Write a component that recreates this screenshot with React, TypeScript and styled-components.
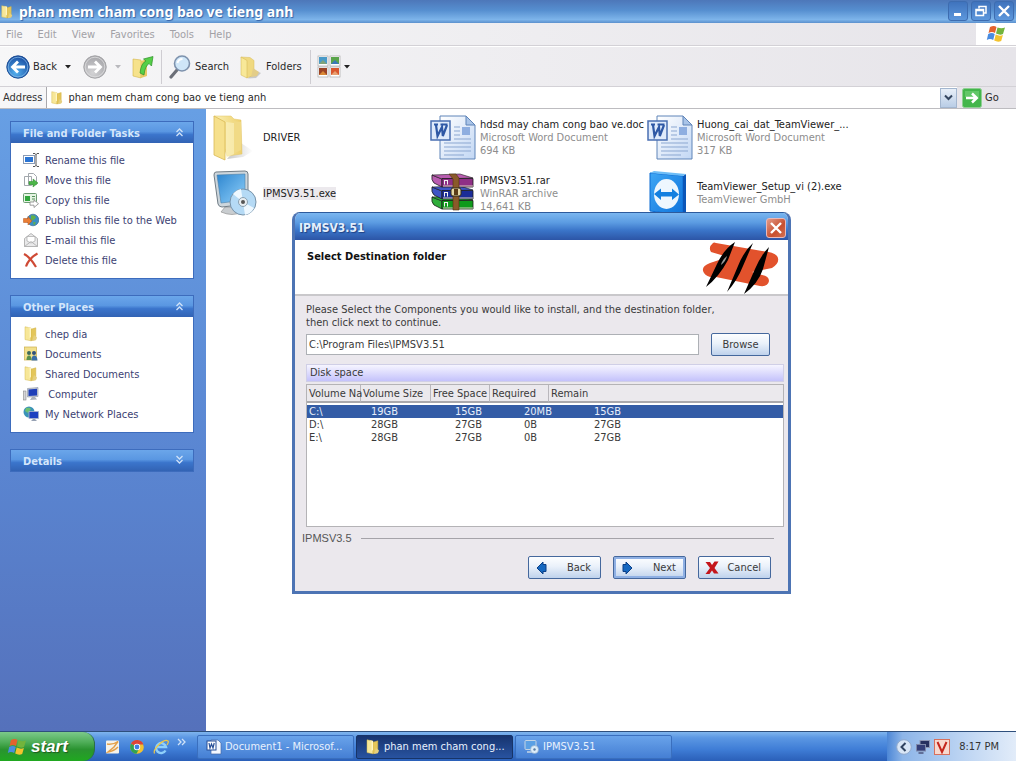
import React from "react";
import styled, { createGlobalStyle, css } from "styled-components";

const ui = `"DejaVu Sans Condensed", "Noto Sans", sans-serif`;

const GlobalStyle = createGlobalStyle`
  *, *::before, *::after { box-sizing: border-box; }
  body { margin: 0; background: #fff; font: 11px/13px ${ui}; color: #2a2a2a; }
  button, input { font: inherit; color: inherit; }
  ul { list-style: none; margin: 0; padding: 0; }
  h1, h2, h3, p { margin: 0; font-size: inherit; }
  svg { display: block; flex: none; }
`;

const Screen = styled.div`
  min-height: 100vh;
  display: flex;
  flex-direction: column;
  padding-right: 8px;
`;

/* ---------- Explorer chrome ---------- */

const TitleBar = styled.header`
  display: flex;
  align-items: center;
  height: 23px;
  background: linear-gradient(#4d77b9 0%, #568fd0 45%, #7db4ea 85%, #5b90cd 100%);
  color: #fff;
`;

const WindowTitle = styled.h1`
  flex: 1;
  padding-left: 5px;
  font: bold 14px/20px "Noto Sans", sans-serif;
  text-shadow: 1px 1px 1px #3562a5;
  white-space: nowrap;
`;

const WindowButtons = styled.div`
  display: flex;
  gap: 3px;
  padding: 0 2px 2px 0;
`;

const CaptionButton = styled.button<{ $danger?: boolean }>`
  display: grid;
  place-items: center;
  width: 20px;
  height: 20px;
  padding: 0;
  border: 1px solid ${(p) => (p.$danger ? "#e9b9b9" : "#3d6cb0")};
  border-radius: 3px;
  background: ${(p) =>
    p.$danger
      ? "linear-gradient(135deg, #e39a88, #c8502f 60%, #d4704f)"
      : "linear-gradient(#3f73bd, #5c97dc)"};
`;

const MenuBar = styled.nav`
  display: flex;
  height: 23px;
  border-bottom: 1px solid #d3d1d6;
  background: linear-gradient(90deg, #f7f7f8, #e6e4e9);
`;

const MenuItems = styled.div`
  display: flex;
  flex: 1;
  gap: 15px;
  padding-left: 6px;
`;

const MenuButton = styled.button`
  padding: 0;
  border: 0;
  background: none;
  color: #a2a1a6;
`;

const FlagBox = styled.div`
  display: grid;
  place-items: center;
  width: 40px;
  background: #fff;
`;

const ToolBar = styled.div`
  display: flex;
  align-items: center;
  height: 40px;
  padding-left: 6px;
  border-top: 1px solid #fff;
  background: linear-gradient(90deg, #f7f7f8, #e6e4e9);
`;

const ToolButton = styled.button<{ $end?: number }>`
  display: flex;
  align-items: center;
  gap: 3px;
  margin-right: ${(p) => p.$end ?? 0}px;
  padding: 0;
  border: 0;
  background: none;
`;

const Divider = styled.span`
  width: 1px;
  height: 34px;
  margin-right: 3px;
  background: #cfcdd2;
`;

const AddressBar = styled.div`
  display: flex;
  align-items: center;
  height: 23px;
  border-top: 1px solid #d3d1d6;
  border-bottom: 1px solid #bdbcc0;
  background: linear-gradient(90deg, #f7f7f8, #e6e4e9);
`;

const AddressLabel = styled.label`
  padding: 0 4px 0 3px;
  color: #333;
`;

const AddressField = styled.div`
  display: flex;
  flex: 1;
  align-items: center;
  gap: 4px;
  height: 21px;
  padding-left: 3px;
  border-left: 1px solid #a9a9ad;
  background: #fff;
`;

const AddressInput = styled.input`
  flex: 1;
  min-width: 0;
  padding: 0;
  border: 0;
  outline: 0;
  background: none;
`;

const DropButton = styled.button`
  display: grid;
  place-items: center;
  width: 17px;
  height: 20px;
  padding: 0;
  border: 1px solid #a3b6cf;
  background: linear-gradient(#e8eff8, #b9cde6);
`;

const GoButton = styled.button`
  display: flex;
  align-items: center;
  gap: 3px;
  width: 59px;
  padding: 0 0 0 5px;
  border: 0;
  background: none;
`;

/* ---------- Task pane ---------- */

const Body = styled.div`
  display: flex;
  flex: 1;
`;

const TaskPane = styled.aside`
  display: flex;
  flex-direction: column;
  gap: 16px;
  width: 206px;
  padding: 12px 12px 16px 10px;
  background: linear-gradient(#679fe4, #5a86d2 55%, #5571bb);
`;

const Panel = styled.section`
  border: 1px solid #3d6cbd;
  background: #fff;
`;

const PanelHeader = styled.button`
  display: flex;
  align-items: center;
  justify-content: space-between;
  width: 100%;
  height: 21px;
  padding: 1px 9px 0 12px;
  border: 0;
  background: linear-gradient(#6ba6ea 0%, #5a97e2 45%, #3b75cc 60%, #3263b4 100%);
  color: #d4e6fb;
  font-weight: bold;
`;

const PanelList = styled.ul`
  padding: 7px 0 8px 12px;
`;

const TaskLink = styled.a`
  display: flex;
  align-items: center;
  gap: 6px;
  height: 20px;
  color: #3c4273;
  text-decoration: none;
  white-space: nowrap;
`;

/* ---------- File list ---------- */

const FilePane = styled.main`
  position: relative;
  flex: 1;
  padding-left: 7px;
  background: #fff;
`;

const FileGrid = styled.ul`
  display: grid;
  grid-template-columns: repeat(3, 217px);
  grid-auto-rows: 56px;
`;

const FileItem = styled.li`
  display: flex;
  align-items: center;
  gap: 2px;
`;

const FileText = styled.div`
  display: flex;
  flex-direction: column;
  align-items: flex-start;
  color: #8d8d8d;
  white-space: nowrap;
`;

const FileName = styled.span<{ $selected?: boolean }>`
  color: #222;
  background: ${(p) => (p.$selected ? "#ece9ed" : "none")};
`;

/* ---------- Installer dialog ---------- */

const Dialog = styled.section`
  position: absolute;
  left: 86px;
  top: 103px;
  width: 499px;
  border: 3px solid #4d74b4;
  border-top: 1px solid #2d5a9c;
  border-radius: 8px 8px 0 0;
  background: #ebe8ed;
  color: #3a3a3a;
  overflow: hidden;
`;

const DialogTitle = styled.header`
  display: flex;
  align-items: center;
  justify-content: space-between;
  height: 27px;
  padding: 2px 2px 0 4px;
  background: linear-gradient(#7ab6f0 0%, #5c9ce2 35%, #3a74c8 65%, #2c55a6 100%);
  color: #e4effc;
  font: bold 12px/16px ${ui};
  text-shadow: 1px 1px 1px #1f4184;
`;

const Banner = styled.div`
  display: flex;
  justify-content: space-between;
  height: 56px;
  padding: 2px 8px 0 12px;
  border-bottom: 2px solid #c9c8cb;
  background: #fff;
`;

const BannerTitle = styled.h3`
  padding-top: 8px;
  color: #111;
`;

const DialogBody = styled.div`
  padding: 7px 4px 0 11px;
`;

const PathRow = styled.div`
  display: flex;
  align-items: center;
  gap: 12px;
  padding: 4px 14px 8px 0;
`;

const PathInput = styled.input`
  flex: 1;
  min-width: 0;
  height: 21px;
  padding: 0 2px;
  border: 1px solid #adb0b5;
  border-radius: 0;
  outline: 0;
  background: #fff;
`;

const PushButton = styled.button<{ $width: number; $primary?: boolean }>`
  display: flex;
  align-items: center;
  justify-content: ${(p) => (p.$width > 60 ? "space-between" : "center")};
  width: ${(p) => p.$width}px;
  height: 23px;
  padding: ${(p) => (p.$width > 60 ? "0 9px 0 5px" : "0")};
  border: 1px solid #45689d;
  border-radius: 2px;
  background: linear-gradient(#fdfeff, #eaf1fa 45%, #bfd2ec);
  ${(p) =>
    p.$primary &&
    css`
      box-shadow: inset 0 0 0 2px #8fb0e4;
    `}
`;

const DiskBar = styled.h3`
  height: 18px;
  padding-left: 3px;
  border: 1px solid #d0cfe6;
  background: linear-gradient(#f6f5ff, #c4c2fb);
  font-weight: normal;
  line-height: 16px;
`;

const DiskFrame = styled.div`
  height: 143px;
  margin-top: 2px;
  border: 1px solid #b4b3b6;
  background: #fff;
`;

const DiskTable = styled.table`
  width: 100%;
  table-layout: fixed;
  border-collapse: separate;
  border-spacing: 0;
  line-height: 13px;
`;

const DiskHead = styled.thead`
  background: #ebe9ed;
  &::after {
    content: "";
    display: table-row;
    height: 2px;
    background: #fff;
  }
`;

const HeadCell = styled.th<{ $width?: number }>`
  width: ${(p) => (p.$width ? `${p.$width}px` : "auto")};
  height: 18px;
  padding: 0 0 0 2px;
  border-right: 1px solid #b9b7bc;
  border-bottom: 2px solid #a9a8ac;
  font-weight: normal;
  text-align: left;
  white-space: nowrap;
  &:last-child { border-right: 0; }
`;

const DiskRow = styled.tr<{ $selected?: boolean }>`
  color: ${(p) => (p.$selected ? "#e6eefa" : "#3a3a3a")};
  background: ${(p) => (p.$selected ? "#335ca6" : "none")};
`;

const DiskCell = styled.td<{ $indent: number }>`
  padding: 0 0 0 ${(p) => p.$indent}px;
  white-space: nowrap;
`;

const Brand = styled.div`
  display: flex;
  align-items: center;
  gap: 9px;
  padding: 5px 14px 0 7px;
  color: #555;
  font: 11px/13px "Liberation Sans", sans-serif;
  &::after {
    content: "";
    flex: 1;
    height: 1px;
    background: #a5a3a9;
  }
`;

const DialogActions = styled.footer`
  display: flex;
  justify-content: flex-end;
  gap: 12px;
  padding: 11px 17px 12px;
`;

/* ---------- Task bar ---------- */

const TaskBar = styled.footer`
  display: flex;
  align-items: center;
  height: 30px;
  border-top: 1px solid #2e4f7c;
  background: linear-gradient(#7fb5ee 0%, #5b97e3 20%, #3f7dd6 60%, #2a5fb8 100%);
  color: #e8f1fd;
`;

const StartButton = styled.button`
  display: flex;
  align-items: center;
  gap: 4px;
  width: 95px;
  height: 29px;
  padding: 0 0 0 7px;
  border: 0;
  border-right: 1px solid #2c6d45;
  border-radius: 0 12px 12px 0;
  background: linear-gradient(#7cc98a 0%, #4fae59 35%, #2a9330 60%, #20a820 100%);
  color: #fff;
  font: italic bold 17px/20px "Liberation Sans", sans-serif;
  text-shadow: 1px 1px 1px #1b5a20;
`;

const QuickLaunch = styled.div`
  display: flex;
  align-items: center;
  gap: 8px;
  width: 102px;
  padding-left: 10px;
`;

const TaskButtons = styled.div`
  display: flex;
  flex: 1;
  gap: 2px;
`;

const TaskButton = styled.button<{ $active?: boolean }>`
  display: flex;
  align-items: center;
  gap: 3px;
  width: 157px;
  height: 24px;
  padding: 0 0 0 8px;
  border: 1px solid ${(p) => (p.$active ? "#173468" : "#3a6fbe")};
  border-radius: 2px;
  background: ${(p) =>
    p.$active
      ? "linear-gradient(#17346f, #2853a0)"
      : "linear-gradient(#69a3ea, #457fd4)"};
  color: #e8f1fd;
  white-space: nowrap;
`;

const Tray = styled.div`
  display: flex;
  align-items: center;
  gap: 3px;
  height: 29px;
  padding: 0 17px 0 9px;
  background: linear-gradient(90deg, #4d87d6 0%, #8db5e8 12%, #b9d2f2 55%, #e2ecf9 100%);
  color: #333;
`;

const Clock = styled.time`
  padding-left: 6px;
`;

/* ---------- Drawings ---------- */

const Folder = ({ size = 16 }: { size?: number }) => (
  <svg width={size} height={size} viewBox="0 0 16 16">
    <path d="M2 .8 8 2v12.800L2 13.600z" fill="#f7e798" stroke="#d5b84e" strokeWidth=".5" />
    <path d="M8 3.200 12.800 1.800v11.500L8 14.800z" fill="#e4c659" stroke="#cfae43" strokeWidth=".5" />
    <path d="M4.400 1.300 8 2v9l-1.400 1V2.600z" fill="#fff6c4" />
    <path d="M11 9l3 2.600-1.200 2.600L9 15z" fill="#e5cf7e" />
  </svg>
);

const ToolFolder = () => (
  <svg width="24" height="24" viewBox="0 0 24 24">
    <path d="M15 15l7 3-5 5-8 .5z" fill="#c9c9c9" />
    <path d="M2 2l9 .5 4 3V20l-7 3z" fill="#f0d980" stroke="#d8bd5c" strokeWidth=".5" />
    <path d="M2 2l6 3.500V23l-6-3z" fill="#f8e898" stroke="#d3b450" strokeWidth=".5" />
    <path d="M14 13l6 4-2 4-6 1z" fill="#e3cd88" />
  </svg>
);

const BigFolder = () => (
  <svg width="48" height="48" viewBox="0 0 48 48">
    <defs>
      <linearGradient id="bf1" x1="0" x2="1">
        <stop offset="0" stopColor="#fbf1b4" />
        <stop offset="1" stopColor="#edcf6c" />
      </linearGradient>
      <linearGradient id="bf2" x1="0" x2="1">
        <stop offset="0" stopColor="#bbb" />
        <stop offset="1" stopColor="#fff" />
      </linearGradient>
    </defs>
    <path d="M28 30l12 8-10 6-16 2z" fill="url(#bf2)" opacity=".8" />
    <path d="M1 3 18 3l3 3 7 1 1 34-15 2z" fill="url(#bf1)" stroke="#e2c466" strokeWidth=".5" />
    <path d="M20 8l8 1v28l-8 4z" fill="#f1da86" />
    <path d="M1 3 12 9v38L1 42z" fill="#f6e08c" stroke="#d9b955" strokeWidth=".8" />
    <path d="M13 9l8 1v31l-8 4z" fill="#fbf3c4" opacity=".6" />
  </svg>
);

const WordDoc = () => (
  <svg width="48" height="48" viewBox="0 0 48 48">
    <defs>
      <linearGradient id="wd" x1="0" y1="0" x2="1" y2="1">
        <stop offset="0" stopColor="#fff" />
        <stop offset="1" stopColor="#c2d7f4" />
      </linearGradient>
    </defs>
    <path d="M10 3h26l9 9v34H10z" fill="url(#wd)" stroke="#5f84b8" />
    <path d="M36 3v9h9z" fill="#a9c4e8" stroke="#5f84b8" />
    <path d="M24 14h6M24 18h6M24 22h6M14 30h27M14 34h27M14 38h27M14 42h20" stroke="#8ba7d1" />
    <path d="M24 26h17" stroke="#8ba7d1" />
    <rect x="32" y="14" width="8" height="8" fill="#8eaee0" />
    <rect x="1" y="8" width="19" height="19" fill="#dfeafb" stroke="#4a6fb2" strokeWidth="1.500" />
    <path d="M4 11.500h4M10.500 11.500h7M6 12l1.500 11 4.500-9 .8 9L17 12" fill="none" stroke="#2f58a5" strokeWidth="2.200" />
  </svg>
);

const Installer = () => (
  <svg width="48" height="48" viewBox="0 0 48 48">
    <defs>
      <linearGradient id="in" x1="0" y1="0" x2="1" y2="1">
        <stop offset="0" stopColor="#2e86cf" />
        <stop offset="1" stopColor="#8fd0fb" />
      </linearGradient>
    </defs>
    <path d="M12 38h14l2 5q-8 5-20 0z" fill="#c9cdd0" stroke="#888" strokeWidth=".6" />
    <path d="M3 3 32 2q3 0 3 3v30l-26 3q-3 0-4-3L1 6q0-3 2-3z" fill="#cdd6dc" stroke="#717d86" />
    <path d="M4 6 32 5v26L8 34z" fill="url(#in)" stroke="#4b7fa8" strokeWidth=".6" />
    <circle cx="30" cy="33" r="13" fill="#b5daf5" stroke="#7792a8" />
    <path d="M30 33 20 25a13 13 0 0 1 8-5zM30 33l11 6a13 13 0 0 1-9 7z" fill="#eef8ff" />
    <circle cx="30" cy="33" r="4.500" fill="#e8eef2" stroke="#8aa0b0" />
    <circle cx="30" cy="33" r="2" fill="#555" />
  </svg>
);

const rarBooks: [string, string, number][] = [
  ["#8f2f86", "#b95cb0", 5],
  ["#1b2c98", "#3f55c6", 17],
  ["#0f9a1c", "#2fae3b", 27],
];

const Rar = () => (
  <svg width="48" height="48" viewBox="0 0 48 48">
    {rarBooks.slice().reverse().map(([dark, light, y]) => (
      <g key={y} transform={`translate(0 ${y})`}>
        <path d="M2 1 12 5v8L4 9Q1 6 2 1z" fill={light} stroke="#1c1c1c" strokeWidth=".8" />
        <path d="M2 1 30 0l13 4-31 1z" fill={light} stroke="#1c1c1c" strokeWidth=".6" />
        <path d="M12 4.500h31V13H12z" fill={dark} stroke="#1c1c1c" strokeWidth=".8" />
        <path d="M13 12h30" stroke="#d9cfc0" />
        <path d="M14.500 6.500v4M17.500 6.500v4M14 6.500h4" stroke="#f2f2f2" />
      </g>
    ))}
    <path d="M19 5h7l3 4v32h-6V10z" fill="#8a5a2a" stroke="#4d300f" strokeWidth=".6" />
    <rect x="21" y="19" width="10" height="8" rx="2" fill="#e6d9a8" stroke="#332a18" />
    <rect x="24" y="20" width="4" height="6" fill="#5a3c18" />
  </svg>
);

const TeamViewer = () => (
  <svg width="48" height="48" viewBox="0 0 48 48">
    <defs>
      <linearGradient id="tv" x1="0" y1="0" x2="1" y2="1">
        <stop offset="0" stopColor="#3ea6f4" />
        <stop offset="1" stopColor="#0f74dc" />
      </linearGradient>
    </defs>
    <path d="M36 43l7 1-4 3z" fill="#bbb" />
    <path d="M3 4 36 7v39L3 42z" fill="url(#tv)" stroke="#0b6bd2" />
    <path d="M36 7l3-2v38l-3 3z" fill="#0b56b8" />
    <path d="M3 4l4-2 32 3-3 2z" fill="#6dbdf7" />
    <ellipse cx="19.500" cy="25" rx="12.500" ry="15" fill="#eef7fe" />
    <path d="M7 25l7-5.500v3.500h11v-3.500l7 6-7 5.500v-3.500H14V31z" fill="#1480e0" />
  </svg>
);

const Flag = ({ size = 20 }: { size?: number }) => (
  <svg width={size} height={size} viewBox="0 0 20 20">
    <path d="M4 3q4-2 6.500 0L9 9Q6 7 2.500 9z" fill="#e4622d" />
    <path d="M11.500 3.500q4 1.600 7.500 0L17 10q-3 1.500-7-.500z" fill="#72b43c" />
    <path d="M2.200 10q3.500-2 6.500 0L7.200 16Q4 14 .8 16z" fill="#4a8ce0" />
    <path d="M9.700 10.500q4 2 7.200.500L15.200 17q-3.500 1.500-7-.500z" fill="#f3c32e" />
  </svg>
);

const Chevrons = ({ down, right }: { down?: boolean; right?: boolean }) => (
  <svg width="9" height={right ? 20 : 12} viewBox={right ? "0 0 9 20" : "0 0 9 12"} fill="none" stroke="#cfe2f8" strokeWidth="1.300">
    <path
      d={
        right
          ? "M1 2l3 3-3 3M5 2l3 3-3 3"
          : down
            ? "M1.500 1l3 3 3-3M1.500 5l3 3 3-3"
            : "M1.500 5l3-3 3 3M1.500 9l3-3 3 3"
      }
    />
  </svg>
);

const Caret = ({ color = "#222" }: { color?: string }) => (
  <svg width="6" height="4" viewBox="0 0 6 4">
    <path d="M0 0h6L3 3.500z" fill={color} />
  </svg>
);

const RoundArrow = ({ disabled }: { disabled?: boolean }) => (
  <svg width="24" height="24" viewBox="0 0 24 24">
    <defs>
      <radialGradient id={disabled ? "ra1" : "ra2"} cx=".4" cy=".75" r=".8">
        <stop offset="0" stopColor={disabled ? "#d3d3d5" : "#52b0ee"} />
        <stop offset="1" stopColor={disabled ? "#a2a2a6" : "#15459c"} />
      </radialGradient>
    </defs>
    <circle cx="12" cy="12" r="11.200" fill={`url(#${disabled ? "ra1" : "ra2"})`} stroke={disabled ? "#a5a5a8" : "#1e4e94"} />
    <circle cx="12" cy="12" r="9.800" fill="none" stroke={disabled ? "#dededf" : "#7db5e6"} strokeWidth=".8" />
    <path
      d={disabled ? "M5 12h12M12 6.500l5.500 5.500-5.500 5.500" : "M19 12H7M12 6.500 6.500 12l5.500 5.500"}
      fill="none"
      stroke="#fff"
      strokeWidth="2.800"
    />
  </svg>
);

const FolderUp = () => (
  <svg width="24" height="24" viewBox="0 0 24 24">
    <path d="M2 4l8 1v18l-8-2z" fill="#f6e28b" stroke="#d3b548" strokeWidth=".6" />
    <path d="M10 6l6-2v17l-6 2z" fill="#e8ca66" />
    <path d="M9 18Q10 8 15 6l-2.500-2L22 1.500 20.500 11 18 8.500Q14 11 13 20z" fill="#55cf48" stroke="#2d8f28" strokeWidth=".7" />
  </svg>
);

const Magnifier = () => (
  <svg width="24" height="24" viewBox="0 0 24 24">
    <path d="M9 15 3 22" stroke="#6c6f78" strokeWidth="3.200" strokeLinecap="round" />
    <circle cx="14" cy="8.500" r="7.500" fill="#cfe6f8" stroke="#7e92ad" strokeWidth="1.600" />
    <path d="M9.500 8q1-4 5-4" stroke="#fff" strokeWidth="2" fill="none" />
  </svg>
);

const viewTiles: [number, number, string, string][] = [
  [1, 1, "#4a9ac8", "#7fa37a"],
  [13, 1, "#5aa54b", "#3c79b8"],
  [1, 12, "#9b4326", "#d98835"],
  [13, 12, "#d9572e", "#e8a070"],
];

const Views = () => (
  <svg width="24" height="24" viewBox="0 0 24 24">
    {viewTiles.map(([x, y, a, b]) => (
      <g key={`${x} ${y}`} transform={`translate(${x} ${y})`}>
        <rect width="10" height="10" fill="#fff" stroke="#a9a9a9" strokeWidth=".7" />
        <rect x="1" y="1" width="8" height="7" fill={a} />
        <path d="M1 8 5 4l4 4z" fill={b} />
      </g>
    ))}
  </svg>
);

const GoIcon = () => (
  <svg width="20" height="20" viewBox="0 0 20 20">
    <rect x=".5" y=".5" width="19" height="19" rx="2" fill="#44b64c" stroke="#8fcf93" />
    <path d="M3 3h14v6H3z" fill="#7fd884" opacity=".5" />
    <path d="M4 10h10M10 5.500 14.800 10 10 14.500" fill="none" stroke="#fff" strokeWidth="2.500" />
  </svg>
);

const Cross = () => (
  <svg width="14" height="14" viewBox="0 0 14 14">
    <path d="M2 2l10 10M12 2 2 12" stroke="#fff" strokeWidth="2.400" />
  </svg>
);

const Logo = () => (
  <svg width="78" height="52" viewBox="0 0 78 52">
    <path
      d="M11 1Q6 5 9 10L26 15 8 21Q-2 25 2 31 5 36 14 35L58 44Q66 45 67 39 67 34 60 33L50 30 70 26Q79 20 75 14 72 10 60 9L14 1Q12 0 11 1z"
      fill="#e2522c"
    />
    <path d="M33 0Q22 7 15 22L4 45Q17 35 26 18zM51 1Q42 9 36 24L25 50Q35 39 41 24zM67 5Q59 13 53 27L42 52Q56 42 61 27z" fill="#000" />
    <path d="M25 14q-5 4-6 9 5-4 6-9z" fill="#999" />
  </svg>
);

const SmallIcon = ({ children }: { children: React.ReactNode }) => (
  <svg width="16" height="16" viewBox="0 0 16 16">{children}</svg>
);

const RenameIcon = () => (
  <SmallIcon>
    <rect x=".5" y="3.500" width="11" height="8" fill="#fff" stroke="#8a9bb5" />
    <rect x="2" y="5" width="8" height="5" fill="#2a74d4" />
    <path d="M10 1.500h2l1 1 1-1h2M13 2v12M10 14.500h2l1-1 1 1h2" stroke="#555" fill="none" />
  </SmallIcon>
);
const MoveIcon = () => (
  <SmallIcon>
    <path d="M1.500 4.500v9h7v-9zM5.500 1.500h5l3 3v8h-8z" fill="#fff" stroke="#a3a8ad" />
    <path d="M6 9.500h4V7l5 4-5 4v-2.500H6z" fill="#4cb648" stroke="#2f8a2c" strokeWidth=".5" />
  </SmallIcon>
);
const CopyIcon = () => (
  <SmallIcon>
    <rect x=".5" y="1.500" width="13" height="9" rx="1" fill="#e4f4e2" stroke="#6a9a70" />
    <rect x="2" y="4" width="5" height="5" fill="#2fa63b" />
    <path d="M9 4.500h3M9 7h3" stroke="#548f5a" />
    <path d="M7 10h4V8l4.500 3.700L11 15.500v-2.300H7z" fill="#fff" stroke="#888" strokeWidth=".8" />
  </SmallIcon>
);
const PublishIcon = () => (
  <SmallIcon>
    <circle cx="10" cy="8" r="5.800" fill="#3a8ec4" stroke="#2b5f88" strokeWidth=".6" />
    <path d="M8 3.500q4-1 5 2l-3 3-2-1zM10 10l3 .5-2 3z" fill="#62b04a" />
    <path d="M5 4.500v2H.5v4H5v2.500l4-4z" fill="#ea7d33" stroke="#b3501a" strokeWidth=".5" />
  </SmallIcon>
);
const MailIcon = () => (
  <SmallIcon>
    <path d="M1.500 6.500 8 1.500l6.500 5v8h-13z" fill="#e9e9ea" stroke="#a5a5a5" strokeWidth=".8" />
    <path d="M4 4.500h8V9l-4 2-4-2z" fill="#fff" stroke="#999" strokeWidth=".6" />
    <path d="M1.500 14.500 8 9.500l6.500 5" fill="none" stroke="#aaa" strokeWidth=".8" />
  </SmallIcon>
);
const DeleteIcon = () => (
  <SmallIcon>
    <path d="M1 2q6 3 12 13M14.500 1.500Q6 6 3 14.500" fill="none" stroke="#cf4a35" strokeWidth="2.200" />
  </SmallIcon>
);
const DocumentsIcon = () => (
  <SmallIcon>
    <rect x="1.500" y="1" width="12" height="13" fill="#f2e08c" stroke="#cdb04c" strokeWidth=".7" />
    <circle cx="6" cy="7" r="2" fill="#3e6a5a" />
    <circle cx="11" cy="7" r="2" fill="#2f4f7c" />
    <path d="M3.500 14q0-4.500 2.500-4.500T8.500 14z" fill="#5a8f4a" />
    <path d="M8.500 14.500q0-5 2.800-5t3.200 5z" fill="#3a6fa8" />
  </SmallIcon>
);
const ComputerIcon = () => (
  <SmallIcon>
    <rect x=".5" y="5" width="2.500" height="9" fill="#d5d5d8" stroke="#888" strokeWidth=".6" />
    <path d="M4.500 2.500 15 1.500v9L4.500 11z" fill="#c9ced8" stroke="#8890a0" strokeWidth=".6" />
    <path d="M5.500 3.500 14 2.800v6.700l-8.500.5z" fill="#1e3fb8" />
    <path d="M7 14l2-3h3l2 2.500z" fill="#aab0ba" />
  </SmallIcon>
);
const NetworkIcon = () => (
  <SmallIcon>
    <circle cx="6" cy="6" r="5.500" fill="#3b93b8" />
    <path d="M3 2q4-1 5 1L5 7 2 5z" fill="#6cc072" />
    <rect x="6" y="5.500" width="9.500" height="7" fill="#1d40c0" stroke="#a9b4cc" strokeWidth=".8" />
    <path d="M8 15h6l-2-2h-2z" fill="#97a2b4" />
  </SmallIcon>
);
const PenIcon = () => (
  <SmallIcon>
    <rect x="1" y="1.500" width="13" height="13" rx="1" fill="#f4f2ea" />
    <path d="M2 5q6 1 11-2.500L9 8l-6 5q6-1 10-5" stroke="#e3a04a" strokeWidth="1.500" fill="none" />
  </SmallIcon>
);
const ChromeIcon = () => (
  <SmallIcon>
    <circle cx="8" cy="8" r="6.800" fill="#f1c232" />
    <path d="M8 8 2 4.700A6.800 6.800 0 0 1 14.400 5.500H8z" fill="#dc4437" />
    <path d="M8 8 2 4.700A6.800 6.800 0 0 0 7.500 14.800L10.500 9z" fill="#33a351" />
    <circle cx="8" cy="8" r="3.200" fill="#fff" />
    <circle cx="8" cy="8" r="2.400" fill="#3f7fe0" />
  </SmallIcon>
);
const IeIcon = () => (
  <SmallIcon>
    <path d="M12.500 11.500A5 5 0 1 1 13 8H4.500" fill="none" stroke="#8fd0fa" strokeWidth="2.400" />
    <path d="M1.500 14.500Q0 11 6 5.500T15 2q1 1-1 4" fill="none" stroke="#f0c844" strokeWidth="1.200" />
  </SmallIcon>
);
const WordIcon = () => (
  <SmallIcon>
    <path d="M5 1h7l3 3v11H5z" fill="#f4f8ff" stroke="#4469a8" strokeWidth=".7" />
    <rect x="1" y="2" width="9" height="9" fill="#fff" stroke="#274f98" />
    <path d="M3 4l1 5 1.500-4L7 9l1.200-5" stroke="#274f98" strokeWidth="1.200" fill="none" />
  </SmallIcon>
);
const SetupIcon = () => (
  <SmallIcon>
    <rect x="1" y="1.500" width="11" height="9" rx="1" fill="#5ba0e4" stroke="#c4d4e4" />
    <path d="M3 13h5" stroke="#c4d4e4" strokeWidth="1.500" />
    <circle cx="10.500" cy="10.500" r="4" fill="#dcecf9" stroke="#89a8c4" strokeWidth=".6" />
    <circle cx="10.500" cy="10.500" r="1.200" fill="#5b7ca0" />
  </SmallIcon>
);
const TrayArrow = () => (
  <SmallIcon>
    <circle cx="8" cy="8" r="7.300" fill="#d9e6f6" stroke="#90a9cc" />
    <path d="M9.500 4 5.500 8l4 4" fill="none" stroke="#31435f" strokeWidth="2" />
  </SmallIcon>
);
const TrayNetwork = () => (
  <SmallIcon>
    <rect x="5" y="1.500" width="9.500" height="7" fill="#27305f" stroke="#8e97b5" />
    <rect x="1.500" y="5.500" width="9" height="6.500" fill="#343e78" stroke="#7f89aa" />
    <path d="M3.500 14h5" stroke="#4c557c" strokeWidth="1.500" />
  </SmallIcon>
);
const TrayV = () => (
  <SmallIcon>
    <rect x=".5" y=".5" width="15" height="15" fill="#f8d9cf" stroke="#d8705c" />
    <path d="M3.500 3 8 13l4.500-10" fill="none" stroke="#c4261c" strokeWidth="2" />
  </SmallIcon>
);

const ArrowGlyph = ({ flip }: { flip?: boolean }) => (
  <svg width="16" height="16" viewBox="0 0 16 16">
    <path
      d={flip ? "M13 8 7 2v2.500H4v7h3V14z" : "M3 8l6-6v2.500h3v7H9V14z"}
      fill="#1668c0"
      stroke="#0b3f86"
    />
  </svg>
);

const RedCross = () => (
  <svg width="16" height="16" viewBox="0 0 16 16">
    <path d="M1.500 2H6l2 3 2.500-3.500h4L10.500 8l4 5.500H10L8 10.500 5.500 14h-4L6 8z" fill="#c4161c" />
  </svg>
);

/* ---------- Data ---------- */

const fileTasks: [string, React.ReactNode][] = [
  ["Rename this file", <RenameIcon />],
  ["Move this file", <MoveIcon />],
  ["Copy this file", <CopyIcon />],
  ["Publish this file to the Web", <PublishIcon />],
  ["E-mail this file", <MailIcon />],
  ["Delete this file", <DeleteIcon />],
];

const places: [string, React.ReactNode][] = [
  ["chep dia", <Folder />],
  ["Documents", <DocumentsIcon />],
  ["Shared Documents", <Folder />],
  ["\u00a0Computer", <ComputerIcon />],
  ["My Network Places", <NetworkIcon />],
];

const files: { name: string; info: string[]; icon: React.ReactNode; selected?: boolean }[] = [
  { name: "DRIVER", info: [], icon: <BigFolder /> },
  { name: "hdsd may cham cong bao ve.doc", info: ["Microsoft Word Document", "694 KB"], icon: <WordDoc /> },
  { name: "Huong_cai_dat_TeamViewer_...", info: ["Microsoft Word Document", "317 KB"], icon: <WordDoc /> },
  { name: "IPMSV3.51.exe", info: [], icon: <Installer />, selected: true },
  { name: "IPMSV3.51.rar", info: ["WinRAR archive", "14,641 KB"], icon: <Rar /> },
  { name: "TeamViewer_Setup_vi (2).exe", info: ["TeamViewer GmbH"], icon: <TeamViewer /> },
];

const columns: [string, number | undefined, number][] = [
  ["Volume Na", 54, 2],
  ["Volume Size", 70, 10],
  ["Free Space", 59, 24],
  ["Required", 59, 34],
  ["Remain", undefined, 45],
];

const disks = [
  ["C:\\", "19GB", "15GB", "20MB", "15GB"],
  ["D:\\", "28GB", "27GB", "0B", "27GB"],
  ["E:\\", "28GB", "27GB", "0B", "27GB"],
];

const TaskPanel = ({ title, items }: { title: string; items?: [string, React.ReactNode][] }) => (
  <Panel>
    <PanelHeader>
      {title}
      <Chevrons down={!items} />
    </PanelHeader>
    {items && (
      <PanelList>
        {items.map(([label, icon]) => (
          <li key={label}>
            <TaskLink href="#">
              {icon}
              {label}
            </TaskLink>
          </li>
        ))}
      </PanelList>
    )}
  </Panel>
);

const InstallerDialog = () => (
  <Dialog role="dialog" aria-label="IPMSV3.51">
    <DialogTitle>
      IPMSV3.51
      <CaptionButton $danger aria-label="Close dialog">
        <Cross />
      </CaptionButton>
    </DialogTitle>
    <Banner>
      <BannerTitle>Select Destination folder</BannerTitle>
      <Logo />
    </Banner>
    <DialogBody>
      <p>
        Please Select the Components you would like to install, and the destination folder,
        <br />
        then click next to continue.
      </p>
      <PathRow>
        <PathInput aria-label="Destination folder" defaultValue="C:\Program Files\IPMSV3.51" />
        <PushButton $width={59}>Browse</PushButton>
      </PathRow>
      <DiskBar>Disk space</DiskBar>
      <DiskFrame>
        <DiskTable>
          <DiskHead>
            <tr>
              {columns.map(([label, width]) => (
                <HeadCell key={label} $width={width}>
                  {label}
                </HeadCell>
              ))}
            </tr>
          </DiskHead>
          <tbody>
            {disks.map((row, i) => (
              <DiskRow key={row[0]} $selected={i === 0}>
                {row.map((cell, c) => (
                  <DiskCell key={c} $indent={columns[c][2]}>
                    {cell}
                  </DiskCell>
                ))}
              </DiskRow>
            ))}
          </tbody>
        </DiskTable>
      </DiskFrame>
    </DialogBody>
    <Brand>IPMSV3.5</Brand>
    <DialogActions>
      <PushButton $width={73}>
        <ArrowGlyph />
        <span>Back</span>
      </PushButton>
      <PushButton $width={73} $primary>
        <ArrowGlyph flip />
        <span>Next</span>
      </PushButton>
      <PushButton $width={73}>
        <RedCross />
        <span>Cancel</span>
      </PushButton>
    </DialogActions>
  </Dialog>
);

export default function App() {
  return (
    <Screen>
      <GlobalStyle />
      <TitleBar>
        <Folder size={14} />
        <WindowTitle>phan mem cham cong bao ve tieng anh</WindowTitle>
        <WindowButtons>
          <CaptionButton aria-label="Minimize">
            <svg width="14" height="14"><path d="M3 9h7v3H3z" fill="#fff" /></svg>
          </CaptionButton>
          <CaptionButton aria-label="Restore">
            <svg width="14" height="14" fill="none" stroke="#fff" strokeWidth="1.500">
              <path d="M5 4.500V2.500h7v6.500h-2" />
              <path d="M2 5.500h7.500v6H2zM2 6.500h7.500" />
            </svg>
          </CaptionButton>
          <CaptionButton aria-label="Close">
            <Cross />
          </CaptionButton>
        </WindowButtons>
      </TitleBar>
      <MenuBar>
        <MenuItems>
          {["File", "Edit", "View", "Favorites", "Tools", "Help"].map((m) => (
            <MenuButton key={m}>{m}</MenuButton>
          ))}
        </MenuItems>
        <FlagBox>
          <Flag />
        </FlagBox>
      </MenuBar>
      <ToolBar>
        <ToolButton $end={8}>
          <RoundArrow />
          Back
        </ToolButton>
        <ToolButton $end={12} aria-label="Back history">
          <Caret />
        </ToolButton>
        <ToolButton $end={8} aria-label="Forward">
          <RoundArrow disabled />
        </ToolButton>
        <ToolButton $end={10} aria-label="Forward history">
          <Caret color="#b9b9bd" />
        </ToolButton>
        <ToolButton $end={6} aria-label="Up">
          <FolderUp />
        </ToolButton>
        <Divider />
        <ToolButton $end={10}>
          <span />
          <Magnifier />
          Search
        </ToolButton>
        <ToolButton $end={8}>
          <ToolFolder />
          Folders
        </ToolButton>
        <Divider />
        <ToolButton aria-label="Views">
          <span />
          <Views />
          <Caret />
        </ToolButton>
      </ToolBar>
      <AddressBar>
        <AddressLabel htmlFor="address">Address</AddressLabel>
        <AddressField>
          <Folder size={14} />
          <AddressInput id="address" defaultValue="phan mem cham cong bao ve tieng anh" />
          <DropButton aria-label="Show addresses">
            <svg width="9" height="7" fill="none" stroke="#34465f" strokeWidth="2"><path d="M1 1.500 4.500 5 8 1.500" /></svg>
          </DropButton>
        </AddressField>
        <GoButton>
          <GoIcon />
          Go
        </GoButton>
      </AddressBar>
      <Body>
        <TaskPane>
          <TaskPanel title="File and Folder Tasks" items={fileTasks} />
          <TaskPanel title="Other Places" items={places} />
          <TaskPanel title="Details" />
        </TaskPane>
        <FilePane>
          <FileGrid>
            {files.map((f) => (
              <FileItem key={f.name}>
                {f.icon}
                <FileText>
                  <FileName $selected={f.selected}>{f.name}</FileName>
                  {f.info.map((line) => (
                    <span key={line}>{line}</span>
                  ))}
                </FileText>
              </FileItem>
            ))}
          </FileGrid>
          <InstallerDialog />
        </FilePane>
      </Body>
      <TaskBar>
        <StartButton>
          <Flag />
          start
        </StartButton>
        <QuickLaunch>
          <PenIcon />
          <ChromeIcon />
          <IeIcon />
          <Chevrons right />
        </QuickLaunch>
        <TaskButtons>
          <TaskButton>
            <WordIcon />
            Document1 - Microsof...
          </TaskButton>
          <TaskButton $active>
            <Folder />
            phan mem cham cong...
          </TaskButton>
          <TaskButton>
            <SetupIcon />
            IPMSV3.51
          </TaskButton>
        </TaskButtons>
        <Tray>
          <TrayArrow />
          <TrayNetwork />
          <TrayV />
          <Clock>8:17 PM</Clock>
        </Tray>
      </TaskBar>
    </Screen>
  );
}
